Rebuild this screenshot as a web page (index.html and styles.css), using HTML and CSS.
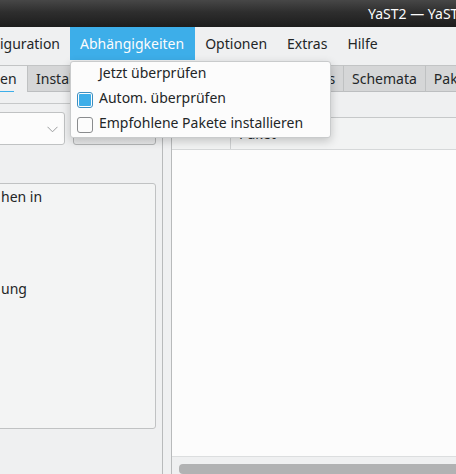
FILE: index.html
```html
<!DOCTYPE html>
<html lang="de">
<head>
<meta charset="utf-8">
<link rel="stylesheet" href="styles.css">
</head>
<body>
<div class="titlebar"><span class="title">YaST2 — YaST2</span></div>
<div class="menubar">
  <div class="mi first">iguration</div>
  <div class="mi active">Abhängigkeiten</div>
  <div class="mi">Optionen</div>
  <div class="mi">Extras</div>
  <div class="mi">Hilfe</div>
</div>
<div class="tabs">
  <div class="tab current"><span class="tabtext">en</span></div>
  <div class="tab t2">Installationsübersicht</div>
  <div class="tab t3">Repositorys</div>
  <div class="tab">Schemata</div>
  <div class="tab last">Paketgruppen</div>
</div>
<div class="main">
  <div class="leftpane">
    <div class="ctrlrow">
      <div class="combo">
        <svg class="chev" width="11" height="7" viewBox="0 0 11 7"><path d="M0.5 0.8 L5.5 5.8 L10.5 0.8" fill="none" stroke="#9a9c9e" stroke-width="1"/></svg>
      </div>
      <div class="btn"></div>
    </div>
    <div class="group">
      <div class="gline">hen in</div>
      <div class="gline second">ung</div>
    </div>
  </div>
  <div class="rightpane">
    <div class="thead">
      <div class="hcol first"></div>
      <div class="hcol">Paket</div>
    </div>
    <div class="tbody"></div>
    <div class="hscroll"><div class="handle"></div></div>
  </div>
</div>
<div class="popup">
  <div class="pitem"><span class="pcheck none"></span><span class="plabel">Jetzt überprüfen</span></div>
  <div class="pitem"><span class="pcheck on"><span class="dot"></span></span><span class="plabel">Autom. überprüfen</span></div>
  <div class="pitem"><span class="pcheck off"></span><span class="plabel">Empfohlene Pakete installieren</span></div>
</div>
</body>
</html>
```
FILE: styles.css
```css
html, body {
  margin: 0;
  padding: 0;
}
body {
  width: 456px;
  height: 474px;
  overflow: hidden;
  position: relative;
  background: #eff0f1;
  color: #232627;
  font-family: "Noto Sans", "DejaVu Sans", sans-serif;
  font-size: 14px;
}
.titlebar {
  height: 27px;
  background: linear-gradient(180deg, #474747 0%, #2e2e2e 45%, #1d1d1d 100%);
  color: #fcfcfc;
  white-space: nowrap;
  overflow: hidden;
  line-height: 28px;
  padding-left: 368px;
  box-sizing: border-box;
}
.menubar {
  height: 33px;
  display: flex;
  white-space: nowrap;
}
.mi {
  padding: 0 10px;
  line-height: 33px;
}
.mi.first {
  padding-left: 0;
}
.mi.active {
  background: #3daee9;
  color: #fcfcfc;
  padding: 0 11px 0 10px;
}
.tabs {
  margin-top: 5px;
  height: 27px;
  display: flex;
  white-space: nowrap;
  overflow: hidden;
}
.tab {
  box-sizing: border-box;
  height: 27px;
  line-height: 26px;
  padding: 0 8px;
  background: #d5d6d7;
  border-top: 1px solid #c2c4c5;
  border-right: 1px solid #bfc1c2;
  border-bottom: 1px solid #bcbec0;
  overflow: hidden;
  flex: none;
}
.tab.current {
  width: 28px;
  padding: 0;
  background: #eff0f1;
  border-bottom: none;
  position: relative;
}
.tabtext {
  display: inline-block;
  line-height: 24px;
  border-bottom: 2px solid #3daee9;
  width: 14px;
  overflow: visible;
}
.tab.t2 {
  width: 222px;
  padding-left: 8px;
}
.tab.t3 {
  width: 94px;
  text-align: right;
}
.tab.last {
  flex: 1;
  border-right: none;
}
.main {
  display: flex;
  height: 382px;
}
.leftpane {
  box-sizing: border-box;
  width: 163px;
  margin-top: 11px;
  border-top: 1px solid #c6c8c9;
  border-right: 1px solid #b8babb;
  padding: 8px 6px 0 0;
  flex: none;
}
.ctrlrow {
  display: flex;
  gap: 8px;
  height: 33px;
}
.combo {
  box-sizing: border-box;
  width: 75px;
  margin-left: -10px;
  height: 33px;
  background: #fcfcfc;
  border: 1px solid #c0c2c3;
  border-radius: 3px;
  display: flex;
  align-items: center;
  justify-content: flex-end;
  padding-right: 6px;
}
.chev {
  display: block;
  margin-top: 2px;
}
.btn {
  box-sizing: border-box;
  width: 83px;
  height: 33px;
  background: linear-gradient(#f0f1f2, #e8e9ea);
  border: 1px solid #b3b5b6;
  border-radius: 3px;
}
.group {
  box-sizing: border-box;
  margin-top: 38px;
  margin-left: -10px;
  height: 246px;
  background: #f3f4f4;
  border: 1px solid #c0c2c3;
  border-radius: 3px;
  padding: 3px 0 0 10px;
  line-height: 19px;
}
.gline.second {
  margin-top: 73px;
}
.rightpane {
  box-sizing: border-box;
  margin-left: 8px;
  margin-top: 25px;
  flex: 1;
  border-left: 1px solid #b8babb;
  border-top: 1px solid #c6c8c9;
  display: flex;
  flex-direction: column;
}
.thead {
  height: 31px;
  display: flex;
  background: #f2f3f3;
  border-bottom: 1px solid #d6d8d9;
  line-height: 31px;
}
.hcol.first {
  width: 50px;
  border-right: 1px solid #cfd1d2;
}
.hcol {
  padding-left: 8px;
}
.tbody {
  height: 310px;
  background: #fcfcfc;
  border-bottom: 1px solid #dcdedf;
}
.hscroll {
  flex: 1;
  padding: 7px 0 0 7px;
}
.handle {
  height: 10px;
  background: #b1b2b3;
  border-radius: 4px;
  margin-right: -10px;
}
.popup {
  position: absolute;
  left: 70px;
  top: 61px;
  width: 261px;
  box-sizing: border-box;
  padding: 0;
  background: #fcfcfc;
  border: 1px solid #c9cbcc;
  border-radius: 3px;
  box-shadow: 0 3px 10px rgba(0, 0, 0, 0.2);
  white-space: nowrap;
}
.pitem {
  height: 25px;
  display: flex;
  align-items: center;
  padding-left: 6px;
  gap: 6px;
  line-height: 19px;
}
.plabel {
  padding-bottom: 4px;
}
.pcheck {
  box-sizing: border-box;
  width: 16px;
  height: 16px;
  border-radius: 3px;
  flex: none;
  display: flex;
  align-items: center;
  justify-content: center;
}
.pcheck.off {
  border: 1px solid #8a8c8e;
  background: #fcfcfc;
}
.pcheck.on {
  border: 1px solid #3b8fc2;
  background: #fcfcfc;
}
.dot {
  width: 12px;
  height: 12px;
  border-radius: 1px;
  background: #3daee9;
}
```
